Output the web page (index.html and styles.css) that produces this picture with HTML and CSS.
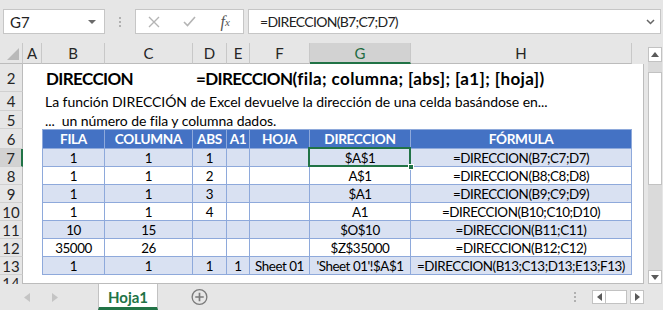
FILE: index.html
```html
<html lang="es">

<head>
    <meta charset="UTF-8">
    <meta name="viewport" content="width=device-width, initial-scale=1.0">
    <title>DIRECCION</title>
    <link rel="stylesheet" href="styles.css">
</head>

<body>
    <div class="formula-bar">
        <div class="name-box"><span>G7</span><span class="caret"></span></div>
        <div class="grip"><i></i><i></i><i></i></div>
        <div class="fx-box">
            <span class="fx-btn">
                <svg width="12" height="12" viewBox="0 0 12 12"><path d="M1 1L11 11M11 1L1 11" stroke="#b4b4b4" stroke-width="1.4" fill="none"/></svg>
            </span>
            <span class="fx-btn">
                <svg width="13" height="11" viewBox="0 0 13 11"><path d="M1 6L4.5 9.5L12 1" stroke="#b4b4b4" stroke-width="1.6" fill="none"/></svg>
            </span>
            <span class="fx-btn fx">f<sub>x</sub></span>
        </div>
        <div class="formula-input">
            <span>=DIRECCION(B7;C7;D7)</span>
            <svg width="9" height="6" viewBox="0 0 9 6"><path d="M1 1L4.5 4.5L8 1" stroke="#666" stroke-width="1.5" fill="none"/></svg>
        </div>
    </div>

    <div class="main">
        <div class="sheet">
            <!-- column headers -->
            <div class="ch corner"><span class="corner-tri"></span></div>
            <div class="ch">A</div>
            <div class="ch">B</div>
            <div class="ch">C</div>
            <div class="ch">D</div>
            <div class="ch">E</div>
            <div class="ch">F</div>
            <div class="ch sel">G</div>
            <div class="ch">H</div>
            <div class="ch-end"></div>

            <!-- row 2 -->
            <div class="rh">2</div>
            <div class="c"></div>
            <div class="c title"><span class="up">DIRECCION</span></div>
            <div class="c"></div>
            <div class="c title syntax"><span class="up">=DIRECCION</span><span class="low">(fila; columna; [abs]; [a1]; [hoja])</span></div>
            <div class="c"></div>
            <div class="c"></div>
            <div class="c"></div>
            <div class="c"></div>
            <div class="pad"></div>

            <!-- row 4 -->
            <div class="rh">4</div>
            <div class="c"></div>
            <div class="c text">La función DIRECCIÓN de Excel devuelve la dirección de una celda basándose en...</div>
            <div class="c"></div>
            <div class="c"></div>
            <div class="c"></div>
            <div class="c"></div>
            <div class="c"></div>
            <div class="c"></div>
            <div class="pad"></div>

            <!-- row 5 -->
            <div class="rh">5</div>
            <div class="c"></div>
            <div class="c text">...&nbsp; un número de fila y columna dados.</div>
            <div class="c"></div>
            <div class="c"></div>
            <div class="c"></div>
            <div class="c"></div>
            <div class="c"></div>
            <div class="c"></div>
            <div class="pad"></div>

            <!-- row 6: table header -->
            <div class="rh">6</div>
            <div class="c"></div>
            <div class="t th first">FILA</div>
            <div class="t th">COLUMNA</div>
            <div class="t th">ABS</div>
            <div class="t th">A1</div>
            <div class="t th">HOJA</div>
            <div class="t th">DIRECCION</div>
            <div class="t th">FÓRMULA</div>
            <div class="pad"></div>

            <!-- row 7 -->
            <div class="rh sel">7</div>
            <div class="c"></div>
            <div class="t band first">1</div>
            <div class="t band">1</div>
            <div class="t band">1</div>
            <div class="t band"></div>
            <div class="t band"></div>
            <div class="t band active">$A$1<span class="handle"></span></div>
            <div class="t band">=DIRECCION(B7;C7;D7)</div>
            <div class="pad"></div>

            <!-- row 8 -->
            <div class="rh">8</div>
            <div class="c"></div>
            <div class="t first">1</div>
            <div class="t">1</div>
            <div class="t">2</div>
            <div class="t"></div>
            <div class="t"></div>
            <div class="t">A$1</div>
            <div class="t">=DIRECCION(B8;C8;D8)</div>
            <div class="pad"></div>

            <!-- row 9 -->
            <div class="rh">9</div>
            <div class="c"></div>
            <div class="t band first">1</div>
            <div class="t band">1</div>
            <div class="t band">3</div>
            <div class="t band"></div>
            <div class="t band"></div>
            <div class="t band">$A1</div>
            <div class="t band">=DIRECCION(B9;C9;D9)</div>
            <div class="pad"></div>

            <!-- row 10 -->
            <div class="rh">10</div>
            <div class="c"></div>
            <div class="t first">1</div>
            <div class="t">1</div>
            <div class="t">4</div>
            <div class="t"></div>
            <div class="t"></div>
            <div class="t">A1</div>
            <div class="t">=DIRECCION(B10;C10;D10)</div>
            <div class="pad"></div>

            <!-- row 11 -->
            <div class="rh">11</div>
            <div class="c"></div>
            <div class="t band first">10</div>
            <div class="t band">15</div>
            <div class="t band"></div>
            <div class="t band"></div>
            <div class="t band"></div>
            <div class="t band">$O$10</div>
            <div class="t band">=DIRECCION(B11;C11)</div>
            <div class="pad"></div>

            <!-- row 12 -->
            <div class="rh">12</div>
            <div class="c"></div>
            <div class="t first">35000</div>
            <div class="t">26</div>
            <div class="t"></div>
            <div class="t"></div>
            <div class="t"></div>
            <div class="t">$Z$35000</div>
            <div class="t">=DIRECCION(B12;C12)</div>
            <div class="pad"></div>

            <!-- row 13 -->
            <div class="rh">13</div>
            <div class="c"></div>
            <div class="t band first">1</div>
            <div class="t band">1</div>
            <div class="t band">1</div>
            <div class="t band">1</div>
            <div class="t band">Sheet 01</div>
            <div class="t band">'Sheet 01'!$A$1</div>
            <div class="t band">=DIRECCION(B13;C13;D13;E13;F13)</div>
            <div class="pad"></div>

            <!-- row 14, cut by the tab bar -->
            <div class="rh cut">14</div>
            <div class="c"></div>
            <div class="c"></div>
            <div class="c"></div>
            <div class="c"></div>
            <div class="c"></div>
            <div class="c"></div>
            <div class="c"></div>
            <div class="c"></div>
            <div class="pad"></div>
        </div>

        <div class="vscroll">
            <div class="sb-btn">
                <svg width="8" height="5" viewBox="0 0 8 5"><path d="M0 5L4 0L8 5Z" fill="#5a5a5a"/></svg>
            </div>
            <div class="vtrack"><div class="vthumb"></div></div>
            <div class="sb-btn">
                <svg width="8" height="5" viewBox="0 0 8 5"><path d="M0 0L8 0L4 5Z" fill="#5a5a5a"/></svg>
            </div>
        </div>
    </div>

    <div class="tabs-bar">
        <div class="nav">
            <svg width="6" height="9" viewBox="0 0 6 9"><path d="M6 0L0 4.5L6 9Z" fill="#c4c4c4"/></svg>
            <svg width="6" height="9" viewBox="0 0 6 9"><path d="M0 0L6 4.5L0 9Z" fill="#c4c4c4"/></svg>
        </div>
        <div class="tab">Hoja1</div>
        <div class="add">
            <svg width="18" height="18" viewBox="0 0 18 18">
                <circle cx="9" cy="9" r="7.8" stroke="#7a7a7a" stroke-width="1.4" fill="none"/>
                <path d="M9 4.5V13.5M4.5 9H13.5" stroke="#7a7a7a" stroke-width="1.8"/>
            </svg>
        </div>
        <div class="spacer"></div>
        <div class="grip small"><i></i><i></i><i></i></div>
        <div class="hscroll">
            <div class="sb-btn h">
                <svg width="5" height="8" viewBox="0 0 5 8"><path d="M5 0L0 4L5 8Z" fill="#5a5a5a"/></svg>
            </div>
            <div class="hthumb"></div>
            <div class="sb-btn h">
                <svg width="5" height="8" viewBox="0 0 5 8"><path d="M0 0L5 4L0 8Z" fill="#5a5a5a"/></svg>
            </div>
        </div>
    </div>
</body>

</html>
```

FILE: styles.css
```css
* {
    margin: 0;
    padding: 0;
    box-sizing: border-box;
}

body {
    width: 663px;
    height: 310px;
    overflow: hidden;
    background: #e6e6e6;
    color: #000;
    font-family: Lato, "Liberation Sans", sans-serif;
    font-size: 14px;
}

/* ---------- formula bar ---------- */

.formula-bar {
    display: flex;
    align-items: center;
    height: 43px;
    padding: 0 2px 0 3px;
}

.name-box,
.fx-box,
.formula-input {
    height: 25px;
    background: #fff;
    border: 1px solid #c6c6c6;
    display: flex;
    align-items: center;
}

.name-box {
    width: 102px;
    justify-content: space-between;
    padding: 0 6px 0 6px;
    font-size: 15px;
    color: #222;
}

.caret {
    border-left: 4px solid transparent;
    border-right: 4px solid transparent;
    border-top: 4px solid #6a6a6a;
    margin-right: 2px;
}

.grip {
    width: 30px;
    display: flex;
    flex-direction: column;
    align-items: center;
    gap: 2px;
}

.grip i {
    display: block;
    width: 2px;
    height: 2px;
    background: #b0b0b0;
}

.fx-box {
    width: 109px;
}

.fx-btn {
    width: 36px;
    display: flex;
    justify-content: center;
    align-items: center;
}

.fx {
    font-family: "Liberation Serif", serif;
    font-style: italic;
    font-size: 16px;
    color: #555;
}

.fx sub {
    font-size: 11px;
    vertical-align: -1px;
}

.formula-input {
    flex: 1;
    margin-left: 4px;
    padding: 0 5px 0 11px;
    justify-content: space-between;
    font-size: 14px;
    letter-spacing: -0.7px;
    color: #222;
}

/* ---------- sheet ---------- */

.main {
    display: flex;
    height: 241px;
}

.sheet {
    width: 644px;
    display: grid;
    grid-template-columns: 23px 19px 63px 88px 34px 23px 60px 101px 221px 12px;
    grid-template-rows: 21px 28px 19px 18px 20px repeat(7, 18px) 9px;
    border-bottom: 1px solid #bcbcbc;
    background: #fff;
}

.ch,
.ch-end {
    background: #e6e6e6;
    display: flex;
    align-items: center;
    justify-content: center;
    font-size: 15px;
    color: #262626;
}

.ch {
    border-right: 1px solid #c8c8c8;
    border-bottom: 1px solid #bcbcbc;
}

.ch.sel {
    background: #d2d2d2;
    color: #1e6b41;
    border-bottom: 2px solid #217346;
}

.corner {
    position: relative;
}

.corner-tri {
    position: absolute;
    right: 3px;
    bottom: 3px;
    border-left: 12px solid transparent;
    border-bottom: 12px solid #b9b9b9;
}

.rh {
    background: #e6e6e6;
    border-right: 1px solid #bcbcbc;
    border-bottom: 1px solid #d0d0d0;
    display: flex;
    align-items: center;
    justify-content: center;
    font-size: 15px;
    color: #262626;
}

.rh.sel {
    background: #d2d2d2;
    border-right: 2px solid #217346;
}

.rh.cut {
    align-items: flex-start;
    overflow: hidden;
    padding-top: 1px;
    line-height: 15px;
    border-bottom: none;
}

.c {
    display: flex;
    align-items: center;
    white-space: nowrap;
    overflow: visible;
}

.pad {
    border-right: 1px solid #bcbcbc;
}

.title {
    font-weight: bold;
    font-size: 17px;
    padding-left: 4px;
}

.title .up {
    letter-spacing: -0.6px;
}

.title .low {
    letter-spacing: 0.4px;
}

.syntax {
    padding-left: 3px;
}

.text {
    padding-left: 3px;
    font-size: 14px;
    letter-spacing: -0.06px;
}

/* ---------- table ---------- */

.t {
    display: flex;
    align-items: center;
    justify-content: center;
    white-space: nowrap;
    border-right: 1px solid #8ea9db;
    border-bottom: 1px solid #8ea9db;
    font-size: 13.4px;
    letter-spacing: -0.45px;
    background: #fff;
}

.t.first {
    border-left: 1px solid #8ea9db;
}

.th {
    background: #4472c4;
    color: #fff;
    font-weight: bold;
    font-size: 13.6px;
    letter-spacing: -0.3px;
    border-top: 1px solid #8ea9db;
}

.band {
    background: #d9e1f2;
}

.active {
    position: relative;
}

.active::after {
    content: '';
    position: absolute;
    left: -2px;
    top: -2px;
    right: -1px;
    bottom: -1px;
    border: 2px solid #217346;
}

.handle {
    position: absolute;
    right: -4px;
    bottom: -4px;
    width: 6px;
    height: 6px;
    background: #217346;
    border: 1px solid #fff;
    z-index: 1;
}

/* ---------- scroll bars ---------- */

.vscroll {
    width: 19px;
    padding: 4px 1px 0 4px;
    display: flex;
    flex-direction: column;
}

.sb-btn {
    height: 15px;
    background: #fff;
    border: 1px solid #c2c2c2;
    display: flex;
    align-items: center;
    justify-content: center;
}

.vtrack {
    height: 208px;
    background: #dadada;
    padding-top: 10px;
}

.vthumb {
    height: 113px;
    background: #fff;
    border: 1px solid #c2c2c2;
}

.vscroll .sb-btn:last-child {
    height: 14px;
}

/* ---------- sheet tabs ---------- */

.tabs-bar {
    display: flex;
    height: 26px;
}

.nav {
    width: 98px;
    display: flex;
    align-items: center;
    gap: 22px;
    padding-left: 24px;
}

.tab {
    width: 60px;
    background: #fff;
    border-left: 1px solid #c2c2c2;
    border-right: 1px solid #c2c2c2;
    border-bottom: 3px solid #217346;
    color: #217346;
    font-weight: bold;
    font-size: 15px;
    display: flex;
    align-items: center;
    justify-content: center;
    padding-top: 2px;
}

.add {
    width: 50px;
    display: flex;
    align-items: center;
    justify-content: center;
    padding-left: 33px;
}

.spacer {
    flex: 1;
}

.grip.small {
    width: 12px;
    justify-content: center;
}

.hscroll {
    display: flex;
    align-items: center;
    margin: 0 19px 0 11px;
}

.sb-btn.h {
    width: 14px;
    height: 14px;
}

.hthumb {
    width: 21px;
    height: 14px;
    background: #fff;
    border: 1px solid #c2c2c2;
    border-left: none;
    margin-right: 3px;
}
```
